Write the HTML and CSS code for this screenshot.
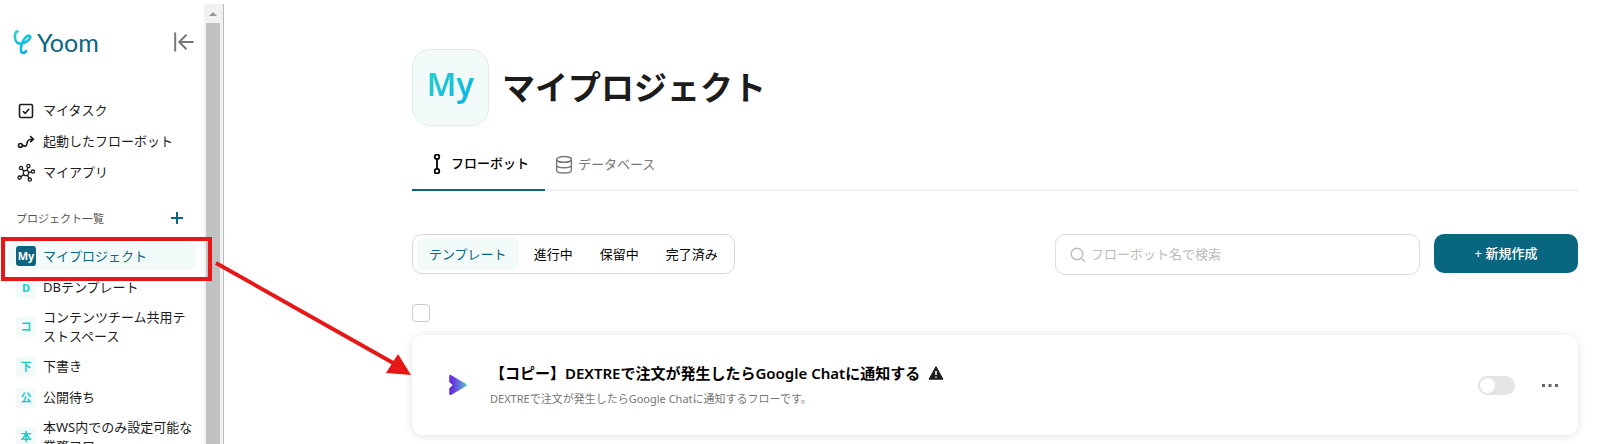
FILE: index.html
```html
<!DOCTYPE html>
<html lang="ja">
<head>
  <meta charset="utf-8">
  <title>Yoom</title>
  <link rel="stylesheet" href="styles.css">
</head>
<body>
  <div class="app">
    <aside class="sidebar">
      <div class="sidebar-inner">
        <div class="brand">
          <a class="logo" href="#">
            <svg class="logo-mark" viewBox="0 0 20 26">
              <defs>
                <linearGradient id="logoGrad" x1="0" y1="0" x2="0.3" y2="1">
                  <stop offset="0" stop-color="#2ad4c0"/>
                  <stop offset="1" stop-color="#06b1f0"/>
                </linearGradient>
              </defs>
              <path d="M4.6 2.4C2.6 2 1.6 6 2 9C2.4 13.4 5 15 9 14.4C13.5 13.6 17.8 10 17.2 7.4C16.2 5.4 12.4 7.6 10.4 11.4C8.6 15 7.6 18.6 8 21.4C8.6 24.6 11.6 24.4 13 22.2"/>
            </svg>
            <span class="logo-text">Yoom</span>
          </a>
          <button class="icon-button collapse" aria-label="メニューを閉じる">
            <svg viewBox="0 0 20 20"><path d="M1.2 0.5V19.5M19.5 10H5.5M12.5 2.8L5.2 10L12.5 17.2"/></svg>
          </button>
        </div>

        <nav class="menu">
          <a class="menu-item" href="#">
            <svg class="menu-icon" viewBox="0 0 20 20"><rect x="3.5" y="3.5" width="13" height="13" rx="1.4"/><path d="M7 10.2L9.2 12.4L13.2 7.8"/></svg>
            <span>マイタスク</span>
          </a>
          <a class="menu-item" href="#">
            <svg class="menu-icon" viewBox="0 0 20 20"><circle cx="4.4" cy="13.4" r="1.9"/><path d="M6.4 13C9 15 10.8 14.2 11 11.2C11.2 8.2 12.4 7 17.2 7.2M14.2 4.2L17.4 7.2L14.2 10.2"/></svg>
            <span>起動したフローボット</span>
          </a>
          <a class="menu-item" href="#">
            <svg class="menu-icon thin" viewBox="0 0 20 20"><circle cx="10" cy="10" r="2.7"/><circle cx="5" cy="5" r="1.6"/><circle cx="12.4" cy="3" r="1.6"/><circle cx="17" cy="8.6" r="1.6"/><circle cx="3.6" cy="14.6" r="1.6"/><circle cx="13.8" cy="16.6" r="1.6"/><path d="M6.2 6.2L8 8.2M11.8 4.6L11 7.4M15.4 9L12.6 9.6M5 13.6L7.8 11.6M13 15.2L11.4 12.4"/></svg>
            <span>マイアプリ</span>
          </a>
        </nav>

        <div class="projects-header">
          <span>プロジェクト一覧</span>
          <button class="icon-button add" aria-label="プロジェクトを追加">
            <svg viewBox="0 0 12 12"><path d="M6 0V12M0 6H12"/></svg>
          </button>
        </div>

        <nav class="projects">
          <a class="project active" href="#"><span class="tag">My</span><span>マイプロジェクト</span></a>
          <a class="project" href="#"><span class="tag">D</span><span>DBテンプレート</span></a>
          <a class="project" href="#"><span class="tag">コ</span><span>コンテンツチーム共用テストスペース</span></a>
          <a class="project" href="#"><span class="tag">下</span><span>下書き</span></a>
          <a class="project" href="#"><span class="tag">公</span><span>公開待ち</span></a>
          <a class="project" href="#"><span class="tag">本</span><span>本WS内でのみ設定可能な業務フロー</span></a>
        </nav>
      </div>
      <div class="scrollbar">
        <div class="scroll-up"></div>
        <div class="scroll-thumb"></div>
      </div>
    </aside>

    <main class="main">
      <header class="page-header">
        <div class="project-icon"><span>My</span></div>
        <h1>マイプロジェクト</h1>
      </header>

      <nav class="tabs">
        <a class="tab active" href="#">
          <svg viewBox="0 0 20 20"><circle cx="10" cy="2.8" r="2.3"/><circle cx="10" cy="17.2" r="2.3"/><path d="M10 5.2V14.8"/></svg>
          <span>フローボット</span>
        </a>
        <a class="tab" href="#">
          <svg viewBox="0 0 20 20"><ellipse cx="10" cy="4.4" rx="7.4" ry="2.9"/><path d="M2.6 4.4V15.2C2.6 16.8 6 18 10 18S17.4 16.8 17.4 15.2V4.4M2.6 10C2.6 11.6 6 12.8 10 12.8S17.4 11.6 17.4 10"/></svg>
          <span>データベース</span>
        </a>
      </nav>

      <div class="toolbar">
        <div class="filters">
          <button class="filter active">テンプレート</button>
          <button class="filter">進行中</button>
          <button class="filter">保留中</button>
          <button class="filter">完了済み</button>
        </div>
        <div class="actions">
          <label class="search">
            <svg viewBox="0 0 16 16"><circle cx="7" cy="7" r="5.8"/><path d="M11.2 11.2L14.8 14.8"/></svg>
            <input type="text" placeholder="フローボット名で検索" aria-label="フローボット名で検索">
          </label>
          <button class="create">+ 新規作成</button>
        </div>
      </div>

      <input class="select-all" type="checkbox" aria-label="すべて選択">

      <article class="bot">
        <svg class="bot-icon" viewBox="0 0 20 22">
          <defs>
            <linearGradient id="botGrad" x1="0" y1="0" x2="1" y2="0">
              <stop offset="0.2" stop-color="#6633e0"/>
              <stop offset="1" stop-color="#5cc4cc"/>
            </linearGradient>
          </defs>
          <path fill="url(#botGrad)" d="M1.2 1.6Q1.4 0.4 2.8 1L18.4 10Q19.4 11 18.4 12L3.4 20.8Q1.2 21.4 1.2 19.4V14.6L4.6 11L1.2 8Z"/>
        </svg>
        <div class="bot-body">
          <h2>
            <span>【コピー】DEXTREで注文が発生したらGoogle Chatに通知する</span>
            <svg class="warning" viewBox="0 0 16 16"><path d="M8 1.6L15 14.2H1Z"/><path class="mark" d="M8 6V10M8 11.6V12.8"/></svg>
          </h2>
          <p>DEXTREで注文が発生したらGoogle Chatに通知するフローです。</p>
        </div>
        <input class="toggle" type="checkbox" role="switch" aria-label="有効にする">
        <button class="icon-button more" aria-label="その他">
          <svg viewBox="0 0 16 3"><path d="M0 0h3v3h-3zM6.5 0h3v3h-3zM13 0h3v3h-3z"/></svg>
        </button>
      </article>
    </main>

    <!-- callout: highlighted project and arrow to the flow bot -->
    <div class="highlight"></div>
    <svg class="arrow" viewBox="0 0 200 120">
      <path class="line" d="M1 2L180 103"/>
      <path class="head" d="M196 114L171 112L183 93Z"/>
    </svg>
  </div>
</body>
</html>
```

FILE: styles.css
```css
:root {
  --primary: #096680;
  --accent: #17cdc4;
  --tint: #f2fafa;
  --border: #dcdfe2;
  --text: #1c1c1c;
  --text-secondary: #777;
  --red: #e61717;
}

* {
  box-sizing: border-box;
}

body {
  margin: 0;
  font-family: "Noto Sans", "Noto Sans CJK JP", sans-serif;
  font-size: 13px;
  line-height: 19px;
  color: var(--text);
  background: #fff;
}

a {
  color: inherit;
  text-decoration: none;
}

button {
  font: inherit;
  color: inherit;
  border: none;
  background: none;
  padding: 0;
  cursor: pointer;
}

svg {
  display: block;
  flex-shrink: 0;
  fill: none;
  stroke: currentColor;
}

.app {
  position: relative;
  display: flex;
  height: 100vh;
  overflow: hidden;
}

/* Sidebar */
.sidebar {
  display: flex;
  flex-shrink: 0;
  width: 224px;
  padding-top: 4px;
}

.sidebar-inner {
  flex: 1;
  min-width: 0;
  padding: 0 8px;
}

.brand {
  display: flex;
  align-items: center;
  justify-content: space-between;
  height: 76px;
  padding: 0 2px 0 5px;
}

.logo {
  display: flex;
  align-items: center;
  gap: 4px;
}

.logo-mark {
  width: 20px;
  height: 26px;
  stroke: url(#logoGrad);
  stroke-width: 2.6;
  stroke-linecap: round;
}

.logo-text {
  font-family: Lato, sans-serif;
  font-size: 25px;
  font-weight: 400;
  line-height: 28px;
  color: var(--primary);
}

.collapse svg {
  width: 20px;
  height: 20px;
  color: #777;
  stroke-width: 2;
}

.menu {
  padding-top: 15px;
}

.menu-item {
  display: flex;
  align-items: center;
  gap: 7px;
  height: 31px;
  padding-left: 8px;
}

.menu-icon {
  width: 20px;
  height: 20px;
  stroke-width: 1.6;
}

.menu-icon.thin {
  stroke-width: 1.3;
}

.projects-header {
  display: flex;
  align-items: center;
  justify-content: space-between;
  height: 28px;
  margin-top: 16px;
  padding: 0 13px 0 8px;
  font-size: 11px;
  color: #555;
}

.add svg {
  width: 12px;
  height: 12px;
  color: var(--primary);
  stroke-width: 2;
}

.projects {
  padding-top: 10px;
}

.project {
  display: flex;
  align-items: center;
  gap: 7px;
  min-height: 31px;
  padding: 5px 0 5px 8px;
  border-radius: 8px;
}

.project.active {
  min-height: 28px;
  margin-bottom: 2px;
  padding: 4px 0 4px 8px;
  color: var(--primary);
  background: var(--tint);
}

.tag {
  flex-shrink: 0;
  width: 20px;
  height: 20px;
  border-radius: 3px;
  font-size: 11px;
  font-weight: 700;
  line-height: 20px;
  text-align: center;
  color: var(--accent);
  background: var(--tint);
}

.active .tag {
  color: #fff;
  background: var(--primary);
}

.scrollbar {
  width: 20px;
  padding: 0 3px 0 2px;
  border-right: 1px solid #bbb;
  background: #f1f1f1;
}

.scroll-up {
  height: 19px;
  padding: 8px 3px 0;
}

.scroll-up::before {
  content: "";
  display: block;
  border: 4px solid transparent;
  border-top: none;
  border-bottom-color: #999;
}

.scroll-thumb {
  height: 100%;
  background: #c1c1c1;
}

/* Main */
.main {
  flex: 1;
  min-width: 0;
  padding: 49px 22px 0 188px;
}

.page-header {
  display: flex;
  align-items: center;
  gap: 13px;
}

.project-icon {
  display: flex;
  align-items: center;
  justify-content: center;
  width: 77px;
  height: 77px;
  padding-bottom: 8px;
  border: 1px solid #e3eaea;
  border-radius: 18px;
  font-size: 32px;
  font-weight: 600;
  line-height: 44px;
  background: var(--tint);
}

.project-icon span {
  background: linear-gradient(135deg, #2ad4c0, #06b1f0);
  background-clip: text;
  -webkit-background-clip: text;
  color: transparent;
}

h1 {
  margin: 0;
  font-size: 33px;
  font-weight: 700;
  line-height: 40px;
}

.tabs {
  display: flex;
  margin-top: 12px;
  border-bottom: 2px solid #f0f0f0;
}

.tab {
  display: flex;
  align-items: center;
  gap: 4px;
  height: 53px;
  margin-bottom: -2px;
  padding: 0 9px;
  color: var(--text-secondary);
}

.tab svg {
  width: 20px;
  height: 20px;
  stroke-width: 1.4;
}

.tab.active {
  padding: 0 16px 0 15px;
  border-bottom: 2px solid var(--primary);
  font-weight: 500;
  color: #000;
}

.tab.active svg {
  stroke-width: 1.8;
}

.toolbar {
  display: flex;
  align-items: flex-start;
  justify-content: space-between;
  margin-top: 43px;
}

.filters {
  display: flex;
  gap: 3px;
  padding: 3px 4px;
  border: 1px solid #d8d8d8;
  border-radius: 10px;
}

.filter {
  height: 32px;
  padding: 0 12px;
  border-radius: 6px;
  color: #000;
}

.filter.active {
  color: var(--primary);
  background: var(--tint);
}

.actions {
  display: flex;
  gap: 14px;
}

.search {
  display: flex;
  align-items: center;
  gap: 5px;
  width: 365px;
  height: 41px;
  padding: 0 14px;
  border: 1px solid var(--border);
  border-radius: 10px;
  color: #bbb;
}

.search svg {
  width: 16px;
  height: 16px;
  stroke-width: 1.4;
}

.search input {
  flex: 1;
  min-width: 0;
  padding: 0;
  border: none;
  outline: none;
  font: inherit;
  background: none;
}

.search input::placeholder {
  color: #bbb;
}

.create {
  width: 144px;
  height: 39px;
  border-radius: 10px;
  font-weight: 500;
  color: #fff;
  background: var(--primary);
}

.select-all {
  display: block;
  appearance: none;
  width: 18px;
  height: 18px;
  margin: 29px 0 0;
  border: 1px solid #ccc;
  border-radius: 4px;
}

.bot {
  display: flex;
  align-items: center;
  height: 100px;
  margin-top: 13px;
  padding: 0 20px 0 36px;
  border-radius: 10px;
  background: #fff;
  box-shadow: 0 1px 8px rgba(0, 0, 0, 0.12);
}

.bot-icon {
  width: 20px;
  height: 22px;
  stroke: none;
}

.bot-body {
  flex: 1;
  margin-left: 22px;
}

h2 {
  display: flex;
  align-items: center;
  gap: 8px;
  margin: 0;
  font-size: 15px;
  font-weight: 600;
  line-height: 24px;
  color: #000;
}

.warning {
  width: 16px;
  height: 16px;
  fill: #1c1c1c;
  stroke: #1c1c1c;
  stroke-linejoin: round;
}

.warning .mark {
  stroke: #fff;
  stroke-width: 1.6;
}

.bot-body p {
  margin: 4px 0 0;
  font-size: 11px;
  line-height: 20px;
  color: var(--text-secondary);
}

.toggle {
  appearance: none;
  width: 37px;
  height: 19px;
  margin: 0 27px 0 0;
  padding: 2px;
  border-radius: 10px;
  background: #e4e4e4;
}

.toggle::before {
  content: "";
  display: block;
  width: 15px;
  height: 15px;
  border-radius: 50%;
  background: #fff;
}

.more svg {
  width: 16px;
  height: 3px;
  fill: #666;
  stroke: none;
}

/* Callout */
.highlight {
  position: absolute;
  top: 237px;
  left: 1px;
  width: 211px;
  height: 44px;
  border: 4px solid var(--red);
}

.arrow {
  position: absolute;
  top: 261px;
  left: 215px;
  width: 200px;
  height: 120px;
}

.arrow .line {
  stroke: var(--red);
  stroke-width: 4;
}

.arrow .head {
  fill: var(--red);
  stroke: none;
}
```
